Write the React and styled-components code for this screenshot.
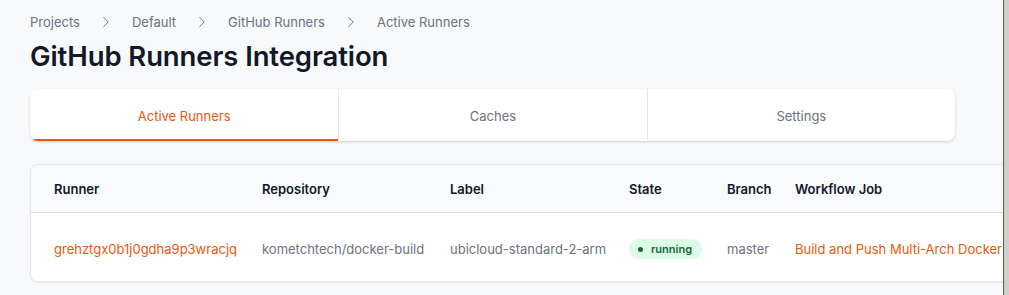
import styled, { createGlobalStyle } from "styled-components";
import { ChevronRight } from "lucide-react";

const Global = createGlobalStyle`
  html, body {
    margin: 0;
    padding: 0;
    background: #f8f9fb;
    font-family: Inter, "Noto Sans", sans-serif;
  }
`

const Shell = styled.div`
  display: flex;
  width: 1009px;
  height: 295px;
  overflow: hidden;
`

const Main = styled.main`
  flex: 1;
  min-width: 0;
  overflow: hidden;
  padding: 10px 0 0 30px;
`

const Scrollbar = styled.div`
  width: 5px;
  border-left: 1px solid #5f5f33;
  background: #cfcfcf;
`

const Crumbs = styled.nav`
  display: flex;
  align-items: center;
  gap: 17px;
  font-size: 13px;
  color: #6b7280;
  height: 22px;
  padding-top: 2px;
  box-sizing: border-box;
`

const Title = styled.h1`
  margin: 7px 0 0;
  font-size: 27.5px;
  font-weight: 600;
  color: #111827;
  line-height: 34px;
  letter-spacing: -0.1px;
`

const Tabs = styled.div`
  display: grid;
  grid-template-columns: repeat(3, 1fr);
  width: 925px;
  margin-top: 16px;
  background: #fff;
  border-radius: 8px;
  overflow: hidden;
  box-shadow: 0 1px 3px rgba(0, 0, 0, 0.12), 0 1px 2px rgba(0, 0, 0, 0.06);
`

const Tab = styled.div`
  height: 52px;
  display: flex;
  align-items: center;
  justify-content: center;
  padding-top: 4px;
  font-size: 13px;
  color: ${p => (p.$active ? "#ea580c" : "#6b7280")};
  border-bottom: 2px solid ${p => (p.$active ? "#ea580c" : "transparent")};
  box-sizing: border-box;
  & + & {
    border-left: 1px solid #e5e7eb;
  }
`

const Card = styled.div`
  margin-top: 23px;
  width: 1000px;
  background: #fff;
  border: 1px solid #e5e7eb;
  border-radius: 8px;
  box-shadow: 0 1px 2px rgba(0, 0, 0, 0.06);
  overflow: hidden;
`

const Row = styled.div`
  display: grid;
  grid-template-columns: 208px 188px 179px 98px 68px auto;
  align-items: center;
  padding-left: 23px;
  height: ${p => (p.$head ? "48px" : "68px")};
  padding-top: ${p => (p.$head ? "0" : "4px")};
  box-sizing: border-box;
  background: ${p => (p.$head ? "#f9fafb" : "#fff")};
  border-bottom: ${p => (p.$head ? "1px solid #d9dce1" : "none")};
  font-size: 13px;
`

const Th = styled.div`
  font-weight: 600;
  color: #111827;
  white-space: nowrap;
`

const Td = styled.div`
  color: ${p => (p.$link ? "#ea580c" : "#6b7280")};
  white-space: nowrap;
`

const Badge = styled.span`
  display: inline-flex;
  align-items: center;
  gap: 8px;
  height: 20px;
  padding: 0 10px 0 9px;
  border-radius: 999px;
  background: #dcfce7;
  color: #166534;
  font-size: 11px;
  font-weight: 600;
  &::before {
    content: "";
    width: 5px;
    height: 5px;
    border-radius: 50%;
    background: #166534;
  }
`

const crumbs = ["Projects", "Default", "GitHub Runners", "Active Runners"]

export default function App() {
  return (
    <Shell>
      <Global />
      <Main>
        <Crumbs>
          {crumbs.map((c, i) => [
            i > 0 && <ChevronRight key={"s" + i} size={18} strokeWidth={1.3} color="#6b7280" />,
            <span key={c}>{c}</span>
          ])}
        </Crumbs>
        <Title>GitHub Runners Integration</Title>
        <Tabs>
          <Tab $active>Active Runners</Tab>
          <Tab>Caches</Tab>
          <Tab>Settings</Tab>
        </Tabs>
        <Card>
          <Row $head>
            <Th>Runner</Th>
            <Th>Repository</Th>
            <Th>Label</Th>
            <Th>State</Th>
            <Th>Branch</Th>
            <Th>Workflow Job</Th>
          </Row>
          <Row>
            <Td $link>grehztgx0b1j0gdha9p3wracjq</Td>
            <Td>kometchtech/docker-build</Td>
            <Td>ubicloud-standard-2-arm</Td>
            <Td><Badge>running</Badge></Td>
            <Td>master</Td>
            <Td $link>Build and Push Multi-Arch Docker Image</Td>
          </Row>
        </Card>
      </Main>
      <Scrollbar />
    </Shell>
  )
}
